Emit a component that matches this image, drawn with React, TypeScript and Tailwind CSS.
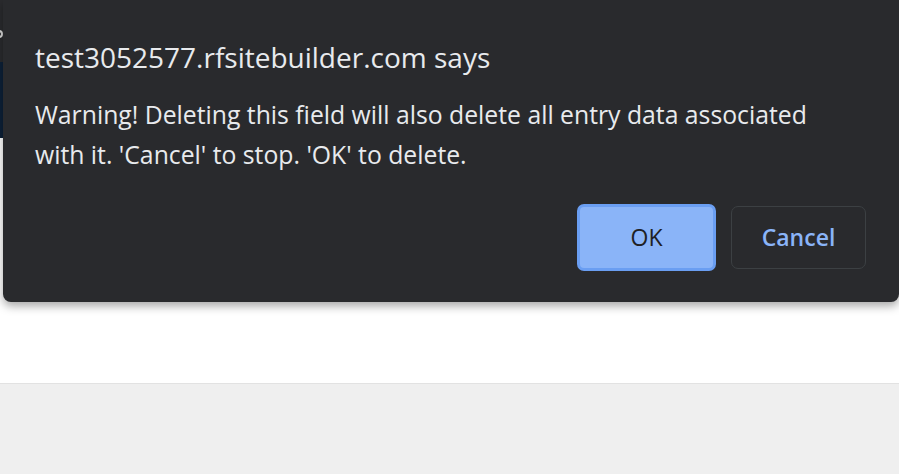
import React from "react";

export default function App() {
  return (
    <div className="relative h-[474px] w-[899px] overflow-hidden font-['Open_Sans',sans-serif]">
      {/* page behind the dialog */}
      <div className="flex h-full flex-col">
        <div className="relative h-[62px] bg-[#2a2b2e]">
          {/* sliver of a glyph peeking out from under the dialog */}
          <div className="absolute left-[-5px] top-[30px] h-[8px] w-[8px] rounded-full border-[2px] border-[#d8d8d8]" />
        </div>
        <div className="h-[76px] bg-[#0d2138]" />
        <div className="h-[245px] bg-white" />
        <div className="flex-1 border-t border-[#e2e2e2] bg-[#efefef]" />
      </div>

      {/* dialog */}
      <div className="absolute left-[3px] right-0 top-0 rounded-b-[8px] bg-[#292a2d] pb-[31px] pl-[32px] pr-[33px] pt-[38px] shadow-[0_4px_10px_rgba(0,0,0,0.35)]">
        <div className="text-[28px] leading-[38px] text-[#e8eaed]">
          test3052577.rfsitebuilder.com says
        </div>
        <div className="mt-[19px] text-[24.75px] leading-[40px] text-[#e8eaed]">
          Warning! Deleting this field will also delete all entry data associated
          <br />
          with it. 'Cancel' to stop. 'OK' to delete.
        </div>
        <div className="mt-[29px] flex justify-end gap-[15px]">
          <button className="h-[67px] w-[139px] rounded-[7px] border-[3px] border-[#6a9ef2] bg-[#8ab4f8] text-[23px] text-[#202124]">
            OK
          </button>
          <button className="my-[2px] h-[63px] w-[135px] rounded-[7px] border border-[#3c4043] text-[23px] font-semibold text-[#8ab4f8]">
            Cancel
          </button>
        </div>
      </div>
    </div>
  );
}
